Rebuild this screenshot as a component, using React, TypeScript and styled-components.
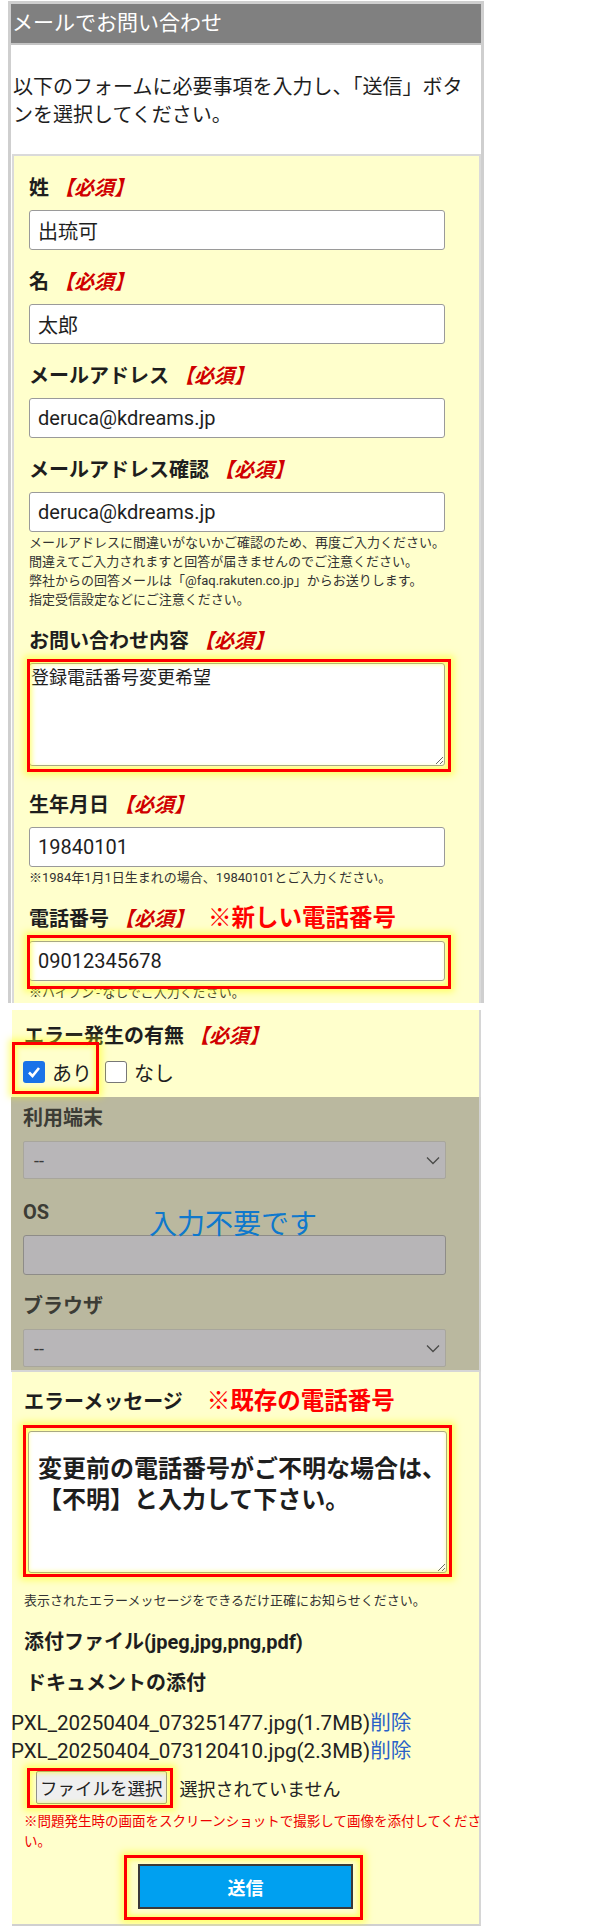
import React from 'react';
import styled, { createGlobalStyle } from 'styled-components';

const FONT = `Roboto, "Noto Sans CJK JP", sans-serif`;

const UPPER_FIELDS = [
  { label: '姓', value: '出琉可' },
  { label: '名', value: '太郎' },
  { label: 'メールアドレス', value: 'deruca@kdreams.jp' },
];

const FILES = [
  'PXL_20250404_073251477.jpg(1.7MB)',
  'PXL_20250404_073120410.jpg(2.3MB)',
];

export default function App() {
  return (
    <>
      <GlobalStyle />
      <Frame>
        <Header>メールでお問い合わせ</Header>
        <Intro>
          以下のフォームに必要事項を入力し、「送信」ボタ
          <br />
          ンを選択してください。
        </Intro>
        <FormBox>
          {UPPER_FIELDS.map((field) => (
            <Field key={field.label} $gap={19}>
              <Label>
                {field.label}
                <Required>【必須】</Required>
              </Label>
              <TextInput readOnly value={field.value} />
            </Field>
          ))}
          <Field $gap={19}>
            <Label>
              メールアドレス確認<Required>【必須】</Required>
            </Label>
            <TextInput readOnly value="deruca@kdreams.jp" />
            <Note>
              メールアドレスに間違いがないかご確認のため、再度ご入力ください。
              <br />
              間違えてご入力されますと回答が届きませんのでご注意ください。
              <br />
              弊社からの回答メールは「@faq.rakuten.co.jp」からお送りします。
              <br />
              指定受信設定などにご注意ください。
            </Note>
          </Field>
          <Field $gap={26}>
            <Label>
              お問い合わせ内容<Required>【必須】</Required>
            </Label>
            <Highlight $inset="-4px -6px -6px -2px">
              <TextArea readOnly value="登録電話番号変更希望" $height={103} />
            </Highlight>
          </Field>
          <Field $gap={18}>
            <Label>
              生年月日<Required>【必須】</Required>
            </Label>
            <TextInput readOnly value="19840101" />
            <Note>※1984年1月1日生まれの場合、19840101とご入力ください。</Note>
          </Field>
          <Field $gap={0}>
            <Label>
              電話番号<Required>【必須】</Required>
              <Annotation $offset={14}>※新しい電話番号</Annotation>
            </Label>
            <Highlight $inset="-6px -6px -8px -2px">
              <TextInput readOnly value="09012345678" />
            </Highlight>
            <Note $top={2}>※ハイフン'-'なしでご入力ください。</Note>
          </Field>
        </FormBox>
      </Frame>

      <ErrorPanel>
        <Label>
          エラー発生の有無<Required>【必須】</Required>
        </Label>
        <CheckRow>
          <Highlight $inset="-16px -7px -8px -11px">
            <Option>
              <CheckBox $checked>
                <svg width="16" height="16" viewBox="0 0 16 16">
                  <path d="M3 8.5 L6.5 12 L13 4" fill="none" stroke="#fff" strokeWidth="2.6" />
                </svg>
              </CheckBox>
              あり
            </Option>
          </Highlight>
          <Option>
            <CheckBox />
            なし
          </Option>
        </CheckRow>
      </ErrorPanel>

      <VeilPanel>
        <VeilLabel>利用端末</VeilLabel>
        <SelectBox>
          <span>--</span>
          <Chevron />
        </SelectBox>
        <VeilLabel $top={20}>OS</VeilLabel>
        <VeilInput />
        <VeilLabel $top={18}>ブラウザ</VeilLabel>
        <SelectBox>
          <span>--</span>
          <Chevron />
        </SelectBox>
        <VeilMessage>入力不要です</VeilMessage>
      </VeilPanel>

      <BottomPanel>
        <Label>
          エラーメッセージ
          <Annotation $offset={24}>※既存の電話番号</Annotation>
        </Label>
        <MessageWrap>
          <Highlight $inset="-6px -5px -4px -5px">
            <MessageArea
              readOnly
              value={'変更前の電話番号がご不明な場合は、\n【不明】と入力して下さい。'}
            />
          </Highlight>
        </MessageWrap>
        <Note $top={18}>表示されたエラーメッセージをできるだけ正確にお知らせください。</Note>
        <SubLabel $top={19}>添付ファイル(jpeg,jpg,png,pdf)</SubLabel>
        <SubLabel $top={14} $indent={2}>
          ドキュメントの添付
        </SubLabel>
        <FileList>
          {FILES.map((name) => (
            <FileLine key={name}>
              {name}
              <DeleteLink>削除</DeleteLink>
            </FileLine>
          ))}
        </FileList>
        <FileRow>
          <Highlight $inset="-3px -6px -4px -9px">
            <FileButton type="button">ファイルを選択</FileButton>
          </Highlight>
          <FileStatus>選択されていません</FileStatus>
        </FileRow>
        <WarnNote>
          ※問題発生時の画面をスクリーンショットで撮影して画像を添付してくださ
          <br />
          い。
        </WarnNote>
        <SubmitRow>
          <Highlight $inset="-9px -10px -11px -14px">
            <SubmitButton type="button">送信</SubmitButton>
          </Highlight>
        </SubmitRow>
      </BottomPanel>
    </>
  );
}

function Chevron() {
  return (
    <svg width="14" height="9" viewBox="0 0 14 9">
      <path d="M1 1.5 L7 7.5 L13 1.5" fill="none" stroke="#4a4a48" strokeWidth="1.3" />
    </svg>
  );
}

const GlobalStyle = createGlobalStyle`
  body {
    margin: 0;
    background: #fff;
    font-family: ${FONT};
    color: #1e1e1e;
  }
`;

const Frame = styled.div`
  margin: 1px 0 0 8px;
  width: 476px;
  box-sizing: border-box;
  border: 3px solid #cfcfcf;
  border-bottom: none;
`;

const Header = styled.h1`
  margin: 0;
  height: 39px;
  line-height: 39px;
  padding-left: 1px;
  background: #808080;
  color: #fff;
  font-size: 21px;
  font-weight: normal;
  border-bottom: 2px solid #c4c4c4;
  white-space: nowrap;
`;

const Intro = styled.p`
  margin: 0;
  padding: 28px 0 25px 2px;
  font-size: 20px;
  line-height: 28px;
  background: #fff;
  white-space: nowrap;
`;

const FormBox = styled.div`
  margin-left: 1px;
  padding: 19px 0 1px 15px;
  background: #ffffcc;
  border: 2px solid #dadada;
  border-bottom: none;
`;

const Field = styled.div<{ $gap: number }>`
  margin-bottom: ${(p) => p.$gap}px;
`;

const Label = styled.div`
  font-size: 20px;
  font-weight: bold;
  line-height: 27px;
  margin-bottom: 8px;
  white-space: nowrap;
`;

const Required = styled.span`
  margin-left: 5px;
  color: #d00000;
  font-style: italic;
`;

const Annotation = styled.span<{ $offset: number }>`
  margin-left: ${(p) => p.$offset}px;
  color: #ff0000;
  font-size: 23.5px;
`;

const TextInput = styled.input`
  display: block;
  box-sizing: border-box;
  width: 416px;
  height: 40px;
  padding: 0 8px;
  border: 1px solid #9a9a9a;
  border-radius: 3px;
  background: #fff;
  font: 20px ${FONT};
  color: #1e1e1e;
  outline: none;
`;

const TextArea = styled.textarea<{ $height: number }>`
  display: block;
  box-sizing: border-box;
  width: 416px;
  height: ${(p) => p.$height}px;
  padding: 2px 0 0 1px;
  border: 1px solid #9a9a9a;
  border-radius: 3px;
  background: #fff;
  font: 18px/24px ${FONT};
  color: #1e1e1e;
  outline: none;
`;

const Note = styled.p<{ $top?: number }>`
  margin: ${(p) => p.$top ?? 1}px 0 0;
  font-size: 13px;
  line-height: 19px;
  color: #333;
  white-space: nowrap;
`;

const Highlight = styled.div<{ $inset: string }>`
  position: relative;
  display: inline-block;
  vertical-align: top;

  &::after {
    content: '';
    position: absolute;
    inset: ${(p) => p.$inset};
    border: 3px solid #ff0000;
    box-shadow: 0 0 7px 3px rgba(255, 255, 0, 0.5), inset 0 0 5px 2px rgba(255, 255, 0, 0.5);
    pointer-events: none;
    z-index: 2;
  }
`;

const Panel = styled.section`
  margin-left: 12px;
  width: 469px;
  box-sizing: border-box;
  background: #ffffcc;
  border-right: 2px solid #d6d6d6;
`;

const ErrorPanel = styled(Panel)`
  margin-top: 7px;
  padding: 13px 0 11px 12px;
`;

const CheckRow = styled.div`
  display: flex;
  align-items: center;
  gap: 13px;
  height: 28px;
  margin-left: -1px;
`;

const Option = styled.label`
  display: flex;
  align-items: center;
  gap: 7px;
  height: 28px;
  font-size: 20px;
`;

const CheckBox = styled.span<{ $checked?: boolean }>`
  display: flex;
  align-items: center;
  justify-content: center;
  width: 22px;
  height: 22px;
  box-sizing: border-box;
  border-radius: 3px;
  background: ${(p) => (p.$checked ? '#1a73e8' : '#fff')};
  border: ${(p) => (p.$checked ? 'none' : '1.5px solid #777')};
`;

const VeilPanel = styled.section`
  position: relative;
  margin-left: 11px;
  width: 470px;
  height: 275px;
  box-sizing: border-box;
  padding: 8px 0 0 12px;
  overflow: hidden;
  background: #bab89f;
  border-right: 2px solid #d2d2d2;
  border-bottom: 2px solid #d6d6d6;
  color: #3c3c35;
`;

const VeilLabel = styled.div<{ $top?: number }>`
  margin: ${(p) => p.$top ?? 0}px 0 9px;
  font-size: 20px;
  font-weight: bold;
  line-height: 27px;
`;

const SelectBox = styled.div`
  display: flex;
  align-items: center;
  justify-content: space-between;
  width: 423px;
  height: 38px;
  box-sizing: border-box;
  padding: 0 5px 0 10px;
  background: #b8b6b8;
  border: 1px solid #a8a69c;
  border-radius: 2px;
  font-size: 18px;
  color: #3a3a3a;
`;

const VeilInput = styled.div`
  width: 423px;
  height: 40px;
  box-sizing: border-box;
  background: #b7b5b7;
  border: 1px solid #8e8c88;
  border-radius: 3px;
`;

const VeilMessage = styled.div`
  position: absolute;
  left: 138px;
  top: 109px;
  font-size: 28px;
  line-height: 38px;
  color: #0f78cc;
`;

const BottomPanel = styled(Panel)`
  padding: 16px 0 15px 12px;
  border-bottom: 2px solid #d0d0d0;
`;

const MessageWrap = styled.div`
  margin: 15px 0 0 4px;
`;

const MessageArea = styled.textarea`
  display: block;
  box-sizing: border-box;
  width: 419px;
  height: 142px;
  padding: 22px 0 0 9px;
  border: 1px solid #9a9a9a;
  border-radius: 3px;
  background: #fff;
  font: bold 24px/31px ${FONT};
  color: #1e1e1e;
  white-space: pre;
  overflow: hidden;
  outline: none;
  resize: vertical;
`;

const SubLabel = styled.div<{ $top: number; $indent?: number }>`
  margin-top: ${(p) => p.$top}px;
  padding-left: ${(p) => p.$indent ?? 0}px;
  font-size: 20px;
  font-weight: bold;
  line-height: 27px;
  white-space: nowrap;
`;

const FileList = styled.div`
  margin: 12px 0 0 -13px;
`;

const FileLine = styled.div`
  font-size: 20.6px;
  line-height: 28px;
  color: #222;
  white-space: nowrap;
`;

const DeleteLink = styled.a`
  color: #2a62c8;
  text-decoration: none;
`;

const FileRow = styled.div`
  display: flex;
  align-items: center;
  gap: 13px;
  margin: 6px 0 0 12px;
`;

const FileButton = styled.button`
  display: block;
  height: 33px;
  padding: 0 3px;
  background: #efefef;
  border: 1px solid #8f8f8f;
  border-radius: 2px;
  font: 17.5px ${FONT};
  color: #222;
`;

const FileStatus = styled.span`
  font-size: 18px;
  color: #222;
`;

const WarnNote = styled.p`
  margin: 7px 0 0;
  font-size: 13.5px;
  line-height: 20px;
  color: #ee0000;
  white-space: nowrap;
`;

const SubmitRow = styled.div`
  margin: 13px 0 0 114px;
`;

const SubmitButton = styled.button`
  display: block;
  width: 215px;
  height: 45px;
  background: #00a0f0;
  border: 2px solid #3a3a3a;
  color: #fff;
  font: bold 18px ${FONT};
`;
